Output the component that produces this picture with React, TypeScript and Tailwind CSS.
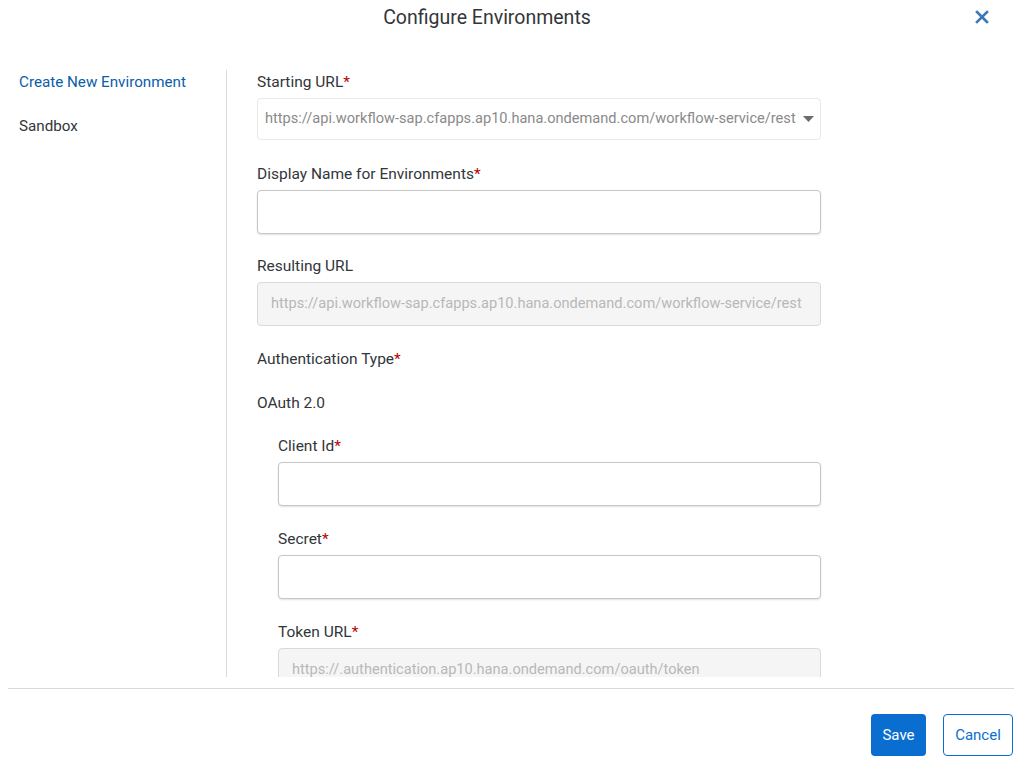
import React from "react";

const Req = () => <span className="text-[#bb0000]">*</span>;

function Label({ children, req }: { children: React.ReactNode; req?: boolean }) {
  return (
    <div className="h-[18px] leading-[18px] text-[15.5px] text-[#32363a] mb-[7px] whitespace-nowrap">
      {children}
      {req && <Req />}
    </div>
  );
}

function Input({ disabled, value }: { disabled?: boolean; value?: string }) {
  return (
    <div
      className={
        "h-[44px] rounded-[4px] border flex items-center px-[13px] text-[14.6px] whitespace-nowrap overflow-hidden " +
        (disabled
          ? "bg-[#f5f5f5] border-[#d9d9d9] text-[#b8b8b8]"
          : "bg-white border-[#c6c6c6] shadow-[0_1px_2px_rgba(0,0,0,0.12)]")
      }
    >
      {value}
    </div>
  );
}

export default function App() {
  return (
    <div
      className="w-[1029px] h-[773px] bg-white flex flex-col overflow-hidden"
      style={{ fontFamily: "Roboto, 'Liberation Sans', sans-serif" }}
    >
      <div className="h-[36px] flex items-center">
        <div className="flex-1 text-center text-[19.5px] text-[#32363a]">Configure Environments</div>
        <button className="w-[55px] h-[36px] flex items-start pt-[10px] text-[#3b78b5]">
          <svg width="14" height="14" viewBox="0 0 14 14" className="ml-[1px]">
            <path d="M2 2 L12 12 M12 2 L2 12" stroke="currentColor" strokeWidth="2.6" strokeLinecap="square" />
          </svg>
        </button>
      </div>

      <div className="mt-[34px] h-[607px] flex overflow-hidden">
        <div className="w-[227px] shrink-0 border-r border-[#d9d9d9] pl-[19px] pt-[3px] flex flex-col gap-[26px]">
          <div className="leading-[18px] text-[15.2px] text-[#0a5ea8]">Create New Environment</div>
          <div className="leading-[18px] text-[15.2px] text-[#32363a]">Sandbox</div>
        </div>

        <div className="pl-[30px] pt-[3px] flex flex-col w-[594px]">
          <div>
            <Label req>Starting URL</Label>
            <div className="h-[42px] rounded-[4px] border border-[#e8e8e8] bg-white flex items-center pl-[7px] pr-[6px] text-[14.6px] text-[#8a8a8a] whitespace-nowrap">
              <span className="flex-1 overflow-hidden">
                https://api.workflow-sap.cfapps.ap10.hana.ondemand.com/workflow-service/rest
              </span>
              <svg width="11" height="6" viewBox="0 0 11 6" className="ml-1 shrink-0">
                <path d="M0 0 L11 0 L5.5 6 Z" fill="#6a6d70" />
              </svg>
            </div>
          </div>
          <div className="mt-[25px]">
            <Label req>Display Name for Environments</Label>
            <Input />
          </div>
          <div className="mt-[23px]">
            <Label>Resulting URL</Label>
            <Input disabled value="https://api.workflow-sap.cfapps.ap10.hana.ondemand.com/workflow-service/rest" />
          </div>
          <div className="mt-[24px] h-[18px] leading-[18px] text-[15.5px] text-[#32363a]">
            Authentication Type
            <Req />
          </div>
          <div className="mt-[26px] h-[18px] leading-[18px] text-[15.5px] text-[#32363a]">OAuth 2.0</div>
          <div className="pl-[21px] mt-[25px] flex flex-col gap-[24px]">
            <div>
              <Label req>Client Id</Label>
              <Input />
            </div>
            <div>
              <Label req>Secret</Label>
              <Input />
            </div>
            <div>
              <Label req>Token URL</Label>
              <Input disabled value="https://.authentication.ap10.hana.ondemand.com/oauth/token" />
            </div>
          </div>
        </div>
      </div>

      <div className="mt-[11px] ml-2 mr-[15px] border-t border-[#d9d9d9]" />

      <div className="flex justify-end gap-[17px] pr-[16px] mt-[25px]">
        <button className="h-[42px] w-[55px] rounded-[4px] bg-[#0a6ed1] text-white text-[15px]">Save</button>
        <button className="h-[42px] w-[70px] rounded-[4px] border border-[#0a6ed1] bg-white text-[#0a6ed1] text-[15px]">
          Cancel
        </button>
      </div>
    </div>
  );
}
